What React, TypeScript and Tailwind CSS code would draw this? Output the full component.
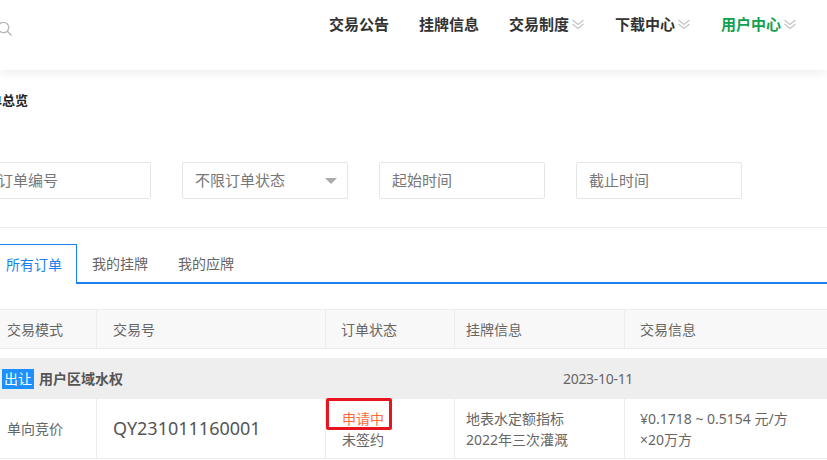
import React from 'react'

const font = { fontFamily: '"Noto Sans", "Noto Sans CJK SC", sans-serif' }

function DoubleChevron() {
  return (
    <svg className="w-[14px] h-[14px] ml-[2px]" viewBox="0 0 14 14" fill="none" stroke="#c4c4c4" strokeWidth="1.2">
      <polyline points="1.5,3 7,7.5 12.5,3" />
      <polyline points="1.5,7 7,11.5 12.5,7" />
    </svg>
  )
}

const navItems = [
  { label: '交易公告', drop: false },
  { label: '挂牌信息', drop: false },
  { label: '交易制度', drop: true },
  { label: '下载中心', drop: true },
  { label: '用户中心', drop: true, active: true },
]

export default function App() {
  return (
    <div className="w-[827px] h-[460px] overflow-hidden bg-white text-[#666]" style={font}>
      {/* header */}
      <div className="relative z-10 h-[70px] bg-white flex items-start shadow-[0_3px_10px_rgba(0,0,0,0.07)]">
        <svg className="w-[16px] h-[16px] -ml-[3px] mt-[21px]" viewBox="0 0 16 16" fill="none" stroke="#b5b5b5" strokeWidth="1.3">
          <circle cx="6.5" cy="6.5" r="5.2" />
          <line x1="10.3" y1="10.3" x2="14.5" y2="14.5" />
        </svg>
        <div className="flex-1" />
        <nav className="flex items-center gap-[30px] pr-[30px] pt-[13px]">
          {navItems.map(item => (
            <div key={item.label} className="flex items-center">
              <span className={`text-[15px] font-bold ${item.active ? 'text-[#0fa14f]' : 'text-[#333]'}`}>{item.label}</span>
              {item.drop && <DoubleChevron />}
            </div>
          ))}
        </nav>
      </div>

      <div className="-ml-[15px] w-[860px]">
        <div className="pt-[21px] h-[92px] text-[13px] font-bold text-[#222]">
          <span className="ml-[-9px]">订单总览</span>
        </div>

        {/* filters */}
        <div className="flex gap-[31px] pb-[28px] border-b border-[#ececec] w-[842px]">
          {['订单编号', '不限订单状态', '起始时间', '截止时间'].map((t, i) => (
            <div key={t} className="w-[166px] h-[37px] border border-[#e6e6e6] rounded-[2px] flex items-center pl-[12px] pr-[10px] text-[15px] text-[#777]">
              <span className="flex-1">{t}</span>
              {i === 1 && <span className="w-0 h-0 border-l-[6px] border-r-[6px] border-t-[6px] border-l-transparent border-r-transparent border-t-[#aaa]" />}
            </div>
          ))}
        </div>

        {/* tabs */}
        <div className="mt-[16px] flex items-end h-[40px] border-b-2 border-[#1a7ff0]">
          <div className="h-[40px] w-[92px] -mb-[2px] bg-white border border-b-0 border-[#1a7ff0] flex items-center pl-[20px] text-[14px] text-[#1a7ff0]">所有订单</div>
          <div className="h-[38px] flex items-center pl-[15px] text-[14px] text-[#666]">我的挂牌</div>
          <div className="h-[38px] flex items-center pl-[30px] text-[14px] text-[#666]">我的应牌</div>
        </div>

        {/* table */}
        <div className="mt-[25px] text-[14px]">
          <div className="flex h-[40px] bg-[#f8f8f8] border-y border-[#ececec]">
            <div className="w-[112px] pl-[22px] flex items-center border-r border-[#ececec]">交易模式</div>
            <div className="w-[229px] pl-[16px] flex items-center border-r border-[#ececec]">交易号</div>
            <div className="w-[129px] pl-[15px] flex items-center border-r border-[#ececec]">订单状态</div>
            <div className="w-[170px] pl-[11px] flex items-center border-r border-[#ececec]">挂牌信息</div>
            <div className="flex-1 pl-[15px] flex items-center">交易信息</div>
          </div>

          <div className="mt-[9px] h-[41px] bg-[#eeeeee] flex items-center">
            <span className="ml-[17px] bg-[#1e8fff] text-white text-[14px] px-[2px] leading-[20px]">出让</span>
            <span className="ml-[5px] font-bold text-[#555]">用户区域水权</span>
            <span className="ml-[440px] text-[#666] tracking-[-0.3px]">2023-10-11</span>
          </div>

          <div className="flex h-[60px] border-b border-[#ececec]">
            <div className="w-[112px] pl-[22px] flex items-center border-r border-[#ececec]">单向竞价</div>
            <div className="w-[229px] pl-[16px] flex items-center border-r border-[#ececec] text-[18px] text-[#555]">QY231011160001</div>
            <div className="relative w-[129px] pl-[16px] flex flex-col justify-center leading-[21px] border-r border-[#ececec]">
              <span className="text-[#ff6a3d]">申请中</span>
              <span>未签约</span>
              <div className="absolute left-0 top-[-1px] w-[66px] h-[32px] border-[3px] border-[#e8141f] rounded-[2px]" />
            </div>
            <div className="w-[170px] pl-[11px] flex flex-col justify-center leading-[21px] border-r border-[#ececec]">
              <span>地表水定额指标</span>
              <span>2022年三次灌溉</span>
            </div>
            <div className="flex-1 pl-[15px] flex flex-col justify-center leading-[21px]">
              <span>¥0.1718 ~ 0.5154 元/方</span>
              <span>×20万方</span>
            </div>
          </div>
        </div>
      </div>
    </div>
  )
}
